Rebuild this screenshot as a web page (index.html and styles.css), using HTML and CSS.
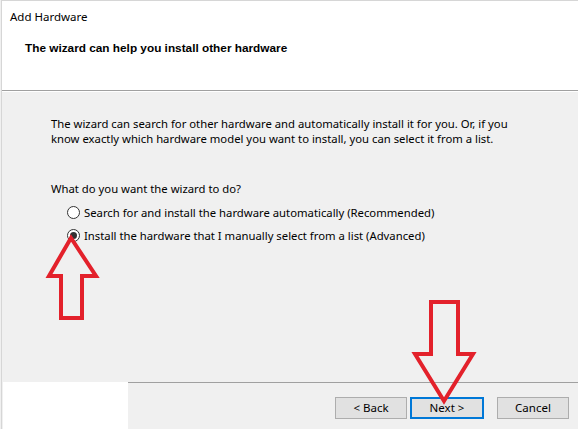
FILE: index.html
```
<!DOCTYPE html>
<html>
<head>
<meta charset="utf-8">
<link rel="stylesheet" href="styles.css">
</head>
<body>
<div class="window">
  <header class="head">
    <div class="title">Add Hardware</div>
    <div class="heading">The wizard can help you install other hardware</div>
  </header>
  <main class="content">
    <p class="intro">The wizard can search for other hardware and automatically install it for you. Or, if you<br>know exactly which hardware model you want to install, you can select it from a list.</p>
    <p class="question">What do you want the wizard to do?</p>
    <div class="options">
      <div class="opt"><span class="radio"></span><span>Search for and install the hardware automatically (Recommended)</span></div>
      <div class="opt"><span class="radio checked"></span><span>Install the hardware that I manually select from a list (Advanced)</span></div>
    </div>
  </main>
  <footer class="foot">
    <div class="blank"></div>
    <div class="bar">
      <button class="btn back">&lt; Back</button>
      <button class="btn next">Next &gt;</button>
      <button class="btn cancel">Cancel</button>
    </div>
  </footer>
  <svg class="marks" width="578" height="429" viewBox="0 0 578 429">
    <polygon points="71,238 49,276 61,276 61,318 82,318 82,276 96,276" fill="none" stroke="#e3212b" stroke-width="4" stroke-linejoin="miter"/>
    <polygon points="431,302 458,302 458,354 473,354 444,401 415,354 431,354" fill="none" stroke="#e3212b" stroke-width="4" stroke-linejoin="miter"/>
  </svg>
</div>
</body>
</html>
```
FILE: styles.css
```
* { box-sizing: border-box; }
html, body { margin: 0; padding: 0; }
body {
  width: 578px;
  height: 429px;
  overflow: hidden;
  background: #f0f0f0;
  font-family: "Noto Sans", "Liberation Sans", sans-serif;
  font-size: 11.3px;
  color: #000;
}
.window {
  position: relative;
  width: 578px;
  height: 429px;
  border-top: 1px solid #d6d6d6;
  border-left: 1px solid #d6d6d6;
  margin-left: 1px;
  display: flex;
  flex-direction: column;
  background: #f0f0f0;
}
.head {
  height: 90px;
  background: #fff;
  border-bottom: 1px solid #a0a0a0;
  padding: 8px 0 0 8px;
  flex: none;
}
.title {
  line-height: 16px;
  font-size: 11.5px;
}
.heading {
  margin-top: 16px;
  padding-left: 15px;
  font-family: "Liberation Sans", Arial, sans-serif;
  font-weight: bold;
  font-size: 11.8px;
  line-height: 14px;
}
.content {
  flex: 1;
  padding: 25px 0 0 49px;
  box-shadow: inset 0 1px 0 #fff;
}
.intro {
  margin: 0;
  line-height: 15px;
  white-space: nowrap;
}
.question {
  margin: 35px 0 0 0;
  line-height: 15px;
}
.options {
  margin-top: 9px;
  padding-left: 16px;
  display: flex;
  flex-direction: column;
  gap: 8px;
}
.opt {
  display: flex;
  align-items: center;
  gap: 4px;
  height: 15px;
  line-height: 15px;
}
.radio {
  width: 13px;
  height: 13px;
  border: 1px solid #333;
  border-radius: 50%;
  background: #fff;
  display: inline-flex;
  align-items: center;
  justify-content: center;
  flex: none;
}
.radio.checked::after {
  content: "";
  width: 7px;
  height: 7px;
  border-radius: 50%;
  background: #333;
}
.foot {
  height: 47px;
  display: flex;
  flex: none;
}
.blank {
  width: 125px;
  margin-left: 1px;
  background: #fff;
  flex: none;
}
.bar {
  flex: 1;
  border-top: 1px solid #a0a0a0;
  display: flex;
  justify-content: flex-end;
  align-items: flex-start;
  padding: 14px 10px 0 0;
}
.btn {
  height: 22px;
  width: 72px;
  background: #e1e1e1;
  border: 1px solid #adadad;
  font-family: "Noto Sans", "Liberation Sans", sans-serif;
  font-size: 11.5px;
  line-height: 18px;
  color: #000;
  padding: 0;
  margin: 0;
}
.next {
  width: 74px;
  margin-left: 3px;
  border-color: #0078d7;
  box-shadow: inset 0 0 0 1px #0078d7;
}
.cancel {
  margin-left: 13px;
}
.marks {
  position: absolute;
  left: -2px;
  top: -1px;
  pointer-events: none;
}
```
